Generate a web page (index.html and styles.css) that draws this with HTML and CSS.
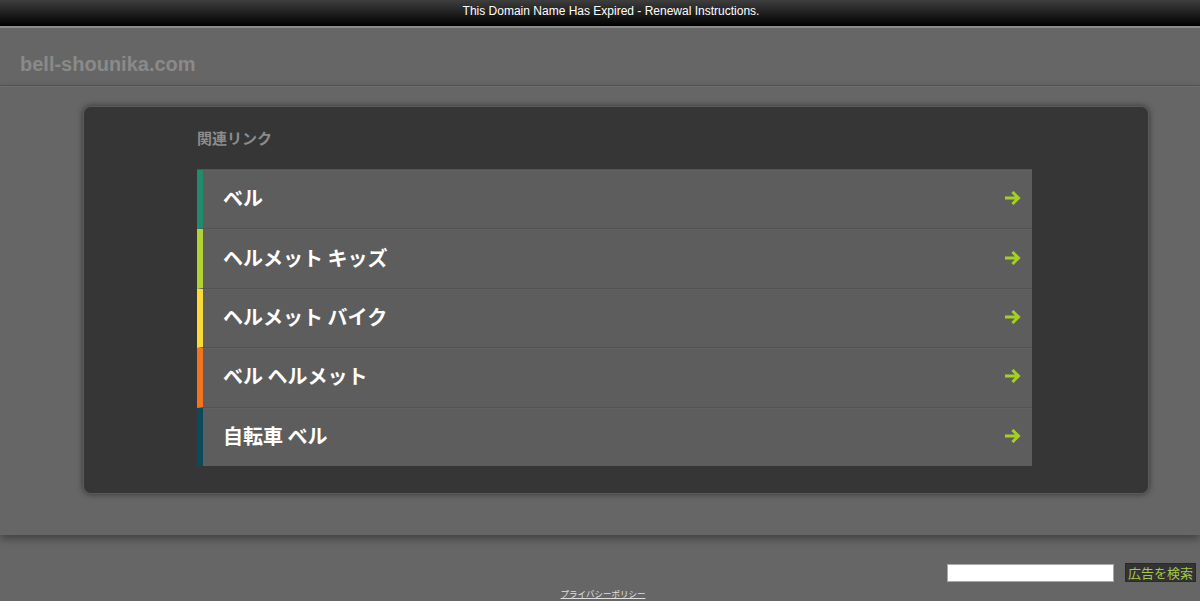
FILE: index.html
```html
<!DOCTYPE html>
<html lang="ja">
<head>
    <meta charset="UTF-8">
    <meta name="viewport" content="width=device-width, initial-scale=1.0">
    <title>bell-shounika.com</title>
    <link rel="stylesheet" href="styles.css">
</head>
<body>
    <div class="topbar">
        <a href="#">This Domain Name Has Expired - Renewal Instructions.</a>
    </div>

    <div class="header">
        <h1 class="domain">bell-shounika.com</h1>
    </div>

    <div class="main">
        <div class="box">
            <div class="inner">
                <h2 class="related">関連リンク</h2>
                <ul class="links">
                    <li class="link c1"><a href="#">ベル</a><span class="arrow"><svg width="17" height="14" viewBox="0 0 17 14"><path d="M1 7h12M8.5 2l5 5-5 5" fill="none" stroke="#a4d11f" stroke-width="3" stroke-linecap="square"/></svg></span></li>
                    <li class="link c2"><a href="#">ヘルメット キッズ</a><span class="arrow"><svg width="17" height="14" viewBox="0 0 17 14"><path d="M1 7h12M8.5 2l5 5-5 5" fill="none" stroke="#a4d11f" stroke-width="3" stroke-linecap="square"/></svg></span></li>
                    <li class="link c3"><a href="#">ヘルメット バイク</a><span class="arrow"><svg width="17" height="14" viewBox="0 0 17 14"><path d="M1 7h12M8.5 2l5 5-5 5" fill="none" stroke="#a4d11f" stroke-width="3" stroke-linecap="square"/></svg></span></li>
                    <li class="link c4"><a href="#">ベル ヘルメット</a><span class="arrow"><svg width="17" height="14" viewBox="0 0 17 14"><path d="M1 7h12M8.5 2l5 5-5 5" fill="none" stroke="#a4d11f" stroke-width="3" stroke-linecap="square"/></svg></span></li>
                    <li class="link c5"><a href="#">自転車 ベル</a><span class="arrow"><svg width="17" height="14" viewBox="0 0 17 14"><path d="M1 7h12M8.5 2l5 5-5 5" fill="none" stroke="#a4d11f" stroke-width="3" stroke-linecap="square"/></svg></span></li>
                </ul>
            </div>
        </div>
    </div>

    <div class="footer">
        <form class="search">
            <input type="text" class="search-input">
            <button type="button" class="search-btn">広告を検索</button>
        </form>
        <a href="#" class="privacy">プライバシーポリシー</a>
    </div>
</body>
</html>
```

FILE: styles.css
```css
body {
    margin: 0;
    background: #666666;
    font-family: "Liberation Sans", Arial, "Noto Sans CJK JP", sans-serif;
    height: 601px;
    overflow: hidden;
}

.topbar {
    height: 26px;
    background: linear-gradient(to bottom, #3e3e3e, #000000);
    border-bottom: 2px solid #8a8a8a;
    text-align: center;
    line-height: 23px;
    font-size: 12px;
    padding-left: 22px;
}

.topbar a {
    color: #ffffff;
    text-decoration: none;
}

.header {
    height: 57px;
    border-bottom: 1px solid #555555;
    box-shadow: 0 1px 0 #6e6e6e;
    padding-left: 20px;
}

.domain {
    margin: 0;
    padding-top: 25px;
    font-size: 20px;
    font-weight: bold;
    color: #8a8a8a;
    line-height: 22px;
}

.main {
    height: 449px;
    padding-top: 20px;
    box-sizing: border-box;
    box-shadow: 0 4px 8px rgba(0, 0, 0, 0.35);
    position: relative;
    z-index: 1;
}

.box {
    margin: 0 51px 0 83px;
    height: 388px;
    background: #363636;
    border: 1px solid #5a5a5a;
    border-radius: 8px;
    box-shadow: 0 0 6px rgba(0, 0, 0, 0.5);
    box-sizing: border-box;
}

.inner {
    width: 835px;
    margin-left: 113px;
    padding-top: 22px;
}

.related {
    margin: 0 0 20px 0;
    font-size: 15px;
    font-weight: bold;
    color: #8c8c8c;
    line-height: 20px;
}

.links {
    list-style: none;
    margin: 0;
    padding: 0;
    border-top: 1px solid #555555;
}

.link {
    display: flex;
    align-items: center;
    justify-content: space-between;
    height: 58.4px;
    background: #5d5d5d;
    border-left: 6px solid;
    border-bottom: 1px solid #535353;
    box-shadow: inset 0 1px 0 #616161;
    padding: 0 10px 0 20px;
}

.link:last-child {
    border-bottom: none;
}

.link a {
    color: #ffffff;
    text-decoration: none;
    font-size: 20px;
    font-weight: bold;
    font-family: "Noto Sans CJK JP", sans-serif;
    margin-top: -3px;
}

.arrow {
    display: flex;
    margin-top: -2px;
}

.c1 { border-left-color: #1f8c6c; }
.c2 { border-left-color: #b5d234; }
.c3 { border-left-color: #fbd936; }
.c4 { border-left-color: #f47321; }
.c5 { border-left-color: #0b4a5c; }

.footer {
    height: 66px;
    position: relative;
    text-align: center;
}

.search {
    display: flex;
    justify-content: flex-end;
    align-items: center;
    gap: 11px;
    padding: 28px 4px 0 0;
    margin: 0;
}

.search-input {
    width: 167px;
    height: 18px;
    box-sizing: border-box;
    border: 1px solid #aaaaaa;
    background: #ffffff;
    padding: 0;
    margin: 0;
}

.search-btn {
    height: 19px;
    background: #333333;
    color: #a4c64a;
    border: 1px solid #2a2a2a;
    font-size: 13px;
    font-family: "Noto Sans CJK JP", sans-serif;
    padding: 0 2px;
    line-height: 17px;
}

.privacy {
    display: inline-block;
    margin-top: 5px;
    margin-left: 6px;
    font-size: 8.5px;
    color: #e0e0e0;
    font-family: "Noto Sans CJK JP", sans-serif;
}
```
